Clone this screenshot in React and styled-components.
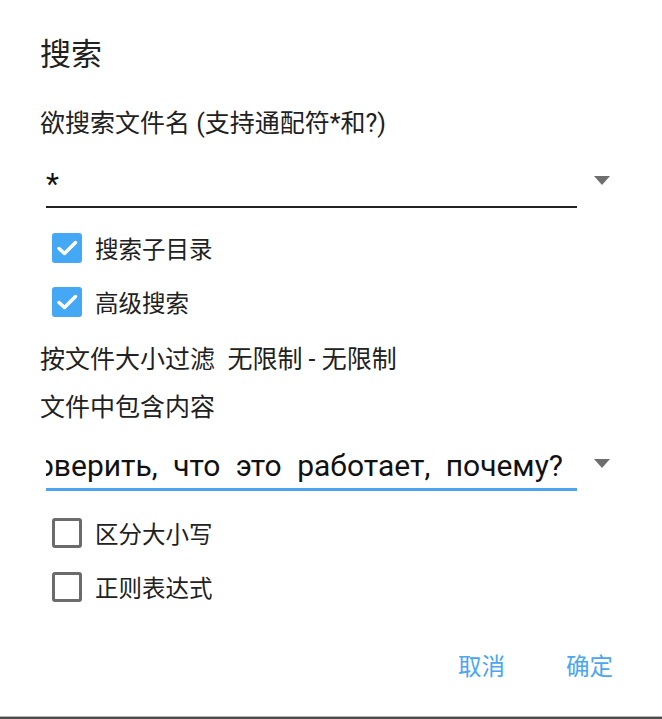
import React from 'react'
import styled, { createGlobalStyle } from 'styled-components';

const GlobalStyle = createGlobalStyle`
html, body {
  margin: 0;
  padding: 0;
  background: #fff;
}
* {
  box-sizing: border-box;
}
`

const Check = () => (
    <svg width="30" height="30" viewBox="0 0 30 30">
        <path d="M7 15.5 L12.5 20.5 L23.5 9.5" fill="none" stroke="#fff" strokeWidth="3.5" strokeLinecap="round" strokeLinejoin="round" />
    </svg>
)

const Arrow = () => (
    <svg width="16" height="9" viewBox="0 0 16 9">
        <path d="M0 0 H16 L8 9 Z" fill="#6e6e6e" />
    </svg>
)

const Option = ({ checked, label, top }) => (
    <CheckRow top={top}>
        <Box checked={checked}>{checked && <Check />}</Box>
        <CheckLabel>{label}</CheckLabel>
    </CheckRow>
)

const App = () => {
    return (
        <>
            <GlobalStyle />
            <Dialog>
                <Title>搜索</Title>
                <Label>欲搜索文件名 (支持通配符*和?)</Label>
                <InputRow top={18}>
                    <Field>
                        <FieldText>*</FieldText>
                    </Field>
                    <DropBtn><Arrow /></DropBtn>
                </InputRow>
                <Option checked top={13} label="搜索子目录" />
                <Option checked label="高级搜索" />
                <TextRow top={7}>按文件大小过滤&nbsp;&nbsp;无限制 - 无限制</TextRow>
                <TextRow>文件中包含内容</TextRow>
                <InputRow top={8}>
                    <Field focused>
                        <FieldText>Проверить, что это работает, почему?</FieldText>
                    </Field>
                    <DropBtn><Arrow /></DropBtn>
                </InputRow>
                <Option top={15} label="区分大小写" />
                <Option label="正则表达式" />
                <Actions>
                    <ActionBtn>取消</ActionBtn>
                    <ActionBtn>确定</ActionBtn>
                </Actions>
            </Dialog>
        </>
    )
}

export default App;

const Dialog = styled.div`
height: 100vh;
padding: 0 0 0 40px;
background: #fff;
border-bottom: 2px solid #4c4c4c;
box-shadow: inset 0 -1px 0 #b4b4b4;
font-family: Roboto, "Noto Sans CJK SC", sans-serif;
color: #212121;
overflow: hidden;
`
const Title = styled.div`
padding-top: 35px;
height: 75px;
line-height: 40px;
font-size: 31px;
`
const Label = styled.div`
margin-top: 34px;
height: 30px;
line-height: 30px;
font-size: 25px;
`
const InputRow = styled.div`
margin-top: ${p => p.top || 0}px;
display: flex;
align-items: flex-start;
`
const Field = styled.div`
margin-left: 6px;
width: 531px;
height: 51px;
display: flex;
justify-content: ${p => p.focused ? 'flex-end' : 'flex-start'};
overflow: hidden;
border-bottom: ${p => p.focused ? '3px solid #4aa4f0' : '2px solid #222'};
padding: ${p => p.focused ? '6px' : '7px'} 14px 0 0;
`
const FieldText = styled.span`
white-space: nowrap;
font-size: 30px;
line-height: 40px;
word-spacing: 8px;
color: #111;
flex-shrink: 0;
`
const DropBtn = styled.div`
display: flex;
margin-left: 17px;
padding-top: 19px;
`
const CheckRow = styled.div`
margin-top: ${p => p.top || 0}px;
height: 54px;
display: flex;
align-items: center;
padding-left: 12px;
`
const Box = styled.div`
width: 30px;
height: 30px;
border-radius: 3px;
display: flex;
align-items: center;
justify-content: center;
background: ${p => p.checked ? '#45a8f5' : 'transparent'};
border: ${p => p.checked ? 'none' : '3px solid #6b6b6b'};
`
const CheckLabel = styled.span`
margin-left: 13px;
font-size: 23.5px;
`
const TextRow = styled.div`
margin-top: ${p => p.top || 0}px;
height: 48px;
line-height: 48px;
font-size: 25px;
`
const Actions = styled.div`
margin-top: 27px;
height: 48px;
display: flex;
justify-content: flex-end;
align-items: center;
gap: 61px;
padding-right: 49px;
`
const ActionBtn = styled.div`
cursor: pointer;
font-size: 23.5px;
color: #4aa6f0;
`
